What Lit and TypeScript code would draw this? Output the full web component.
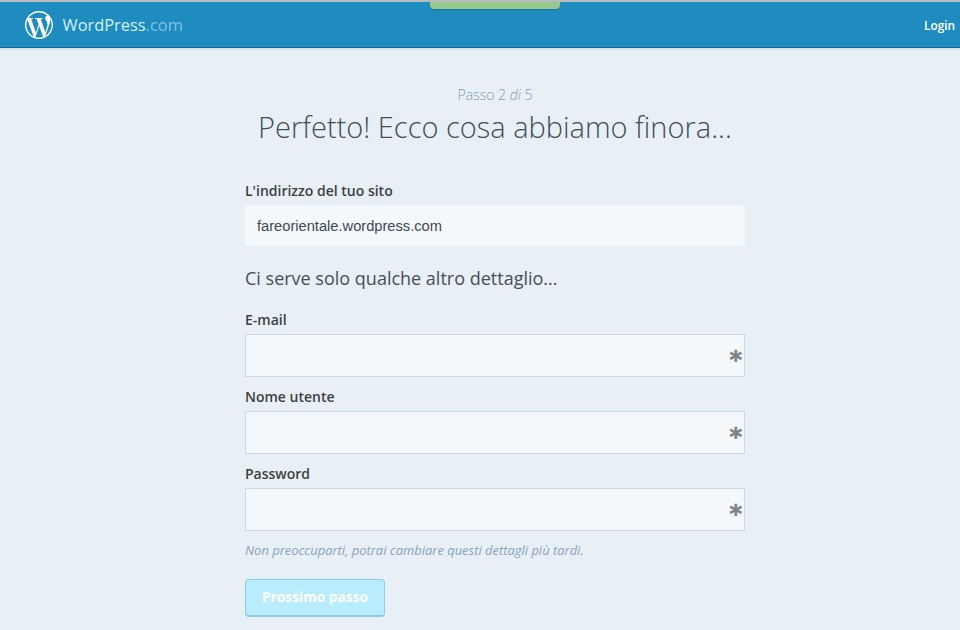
import { LitElement, html, css } from "lit";
import { customElement } from "lit/decorators.js";

const WP = "M21.469 6.825c.84 1.537 1.318 3.3 1.318 5.175 0 3.979-2.156 7.456-5.363 9.325l3.295-9.527c.615-1.54.82-2.771.82-3.864 0-.405-.026-.78-.07-1.11m-7.981.105c.647-.03 1.232-.105 1.232-.105.582-.075.514-.93-.067-.899 0 0-1.755.135-2.88.135-1.064 0-2.85-.15-2.85-.15-.585-.03-.661.855-.075.885 0 0 .54.061 1.125.09l1.68 4.605-2.37 7.08L5.354 6.9c.649-.03 1.234-.1 1.234-.1.585-.075.516-.93-.065-.896 0 0-1.746.138-2.874.138-.2 0-.438-.008-.69-.015C4.911 3.15 8.235 1.215 12 1.215c2.809 0 5.365 1.072 7.286 2.833-.046-.003-.091-.009-.141-.009-1.06 0-1.812.923-1.812 1.914 0 .89.513 1.643 1.06 2.531.411.72.89 1.643.89 2.977 0 .915-.354 1.994-.821 3.479l-1.075 3.585-3.9-11.61.001.014zM12 22.784c-1.059 0-2.081-.153-3.048-.437l3.237-9.406 3.315 9.087c.024.053.05.101.078.149-1.12.393-2.325.609-3.582.609M1.211 12c0-1.564.336-3.05.935-4.39L7.29 21.709C3.694 19.96 1.212 16.271 1.211 12M12 0C5.385 0 0 5.385 0 12s5.385 12 12 12 12-5.385 12-12S18.615 0 12 0";

@customElement("app-root")
export class AppRoot extends LitElement {
  static styles = css`
    :host { display: block; height: 630px; overflow: hidden; background: #e8eff5; font-family: "Open Sans", sans-serif; color: #404040; }
    * { box-sizing: border-box; }
    .bar { position: relative; height: 48px; background: #1e8cbe; border-top: 2px solid #b9bcbd; border-bottom: 1px solid #0f6a94; box-shadow: 0 1px 2px rgba(60,90,110,.18); display: flex; align-items: center; justify-content: space-between; padding: 0 5px 0 25px; }
    .brand { display: flex; align-items: center; gap: 9.5px; color: #fff; font-size: 16.4px; line-height: 24px; }
    .brand svg { width: 28px; height: 28px; fill: #fff; display: block; }
    .brand .name { color: #d5eefa; }
    .brand .dot { color: #7fc3e3; }
    .login { color: #fff; font-size: 11.8px; font-weight: 600; }
    .tab { position: absolute; left: 430px; top: 0; width: 130px; height: 7px; background: #9ac78d; border-radius: 0 0 4px 4px; box-shadow: 0 1px 1px rgba(0,0,0,.15); }
    .form { width: 500px; margin-left: 245px; }
    .step { margin-top: 37px; text-align: center; font-size: 14px; font-weight: 300; line-height: 19px; color: #7f9eb2; }
    h1 { margin: 3px 0 0; text-align: center; font-size: 29px; font-weight: 300; line-height: 40px; color: #404f58; white-space: nowrap; }
    label { display: block; font-size: 14px; font-weight: 600; line-height: 19px; color: #3f3f3f; }
    .first { margin-top: 34px; }
    .site { margin-top: 5px; height: 41px; padding: 0 12px; display: flex; align-items: center; background: #f5f8fb; font-family: "Liberation Sans", Arial, sans-serif; font-size: 14.66px; color: #3c4a52; }
    h2 { margin: 19px 0 0; font-size: 18px; font-weight: 400; line-height: 26px; color: #454f56; }
    .fields { margin-top: 19px; display: flex; flex-direction: column; gap: 10px; }
    .wrap { position: relative; margin-top: 5px; }
    input { display: block; width: 100%; height: 43px; padding: 0 12px; border: 1px solid #ccd9e4; border-radius: 0; background: #f4f8fb; outline: none; font-family: "Liberation Sans", Arial, sans-serif; font-size: 15px; }
    .req { position: absolute; right: 3px; top: 10px; font-family: "DejaVu Sans", sans-serif; font-weight: 700; font-size: 24px; line-height: 32px; color: #808488; -webkit-text-stroke: 0.6px #808488; }
    .hint { margin: 11px 0 0; font-size: 12.95px; font-style: italic; line-height: 17px; color: #87a3ba; }
    button { display: block; margin-top: 20px; width: 140px; height: 38px; padding: 0 0 2px; background: #b9ecfd; border: 1px solid #8fcbe6; border-bottom-width: 2px; border-radius: 4px; color: #fff; font-family: "Open Sans", sans-serif; font-size: 13.75px; font-weight: 700; }
  `;

  field(name: string) {
    return html`<div>
      <label>${name}</label>
      <div class="wrap"><input type="text" aria-label=${name} /><span class="req">*</span></div>
    </div>`;
  }

  render() {
    return html`
      <header class="bar">
        <div class="brand">
          <svg viewBox="0 0 24 24"><path d=${WP}></path></svg>
          <span><span class="name">WordPress</span><span class="dot">.com</span></span>
        </div>
        <span class="login">Login</span>
        <div class="tab"></div>
      </header>
      <main class="form">
        <div class="step">Passo 2 <i>di</i> 5</div>
        <h1>Perfetto! Ecco cosa abbiamo finora...</h1>
        <label class="first">L'indirizzo del tuo sito</label>
        <div class="site">fareorientale.wordpress.com</div>
        <h2>Ci serve solo qualche altro dettaglio...</h2>
        <div class="fields">
          ${this.field("E-mail")}
          ${this.field("Nome utente")}
          ${this.field("Password")}
        </div>
        <p class="hint">Non preoccuparti, potrai cambiare questi dettagli più tardi.</p>
        <button disabled>Prossimo passo</button>
      </main>
    `;
  }
}
